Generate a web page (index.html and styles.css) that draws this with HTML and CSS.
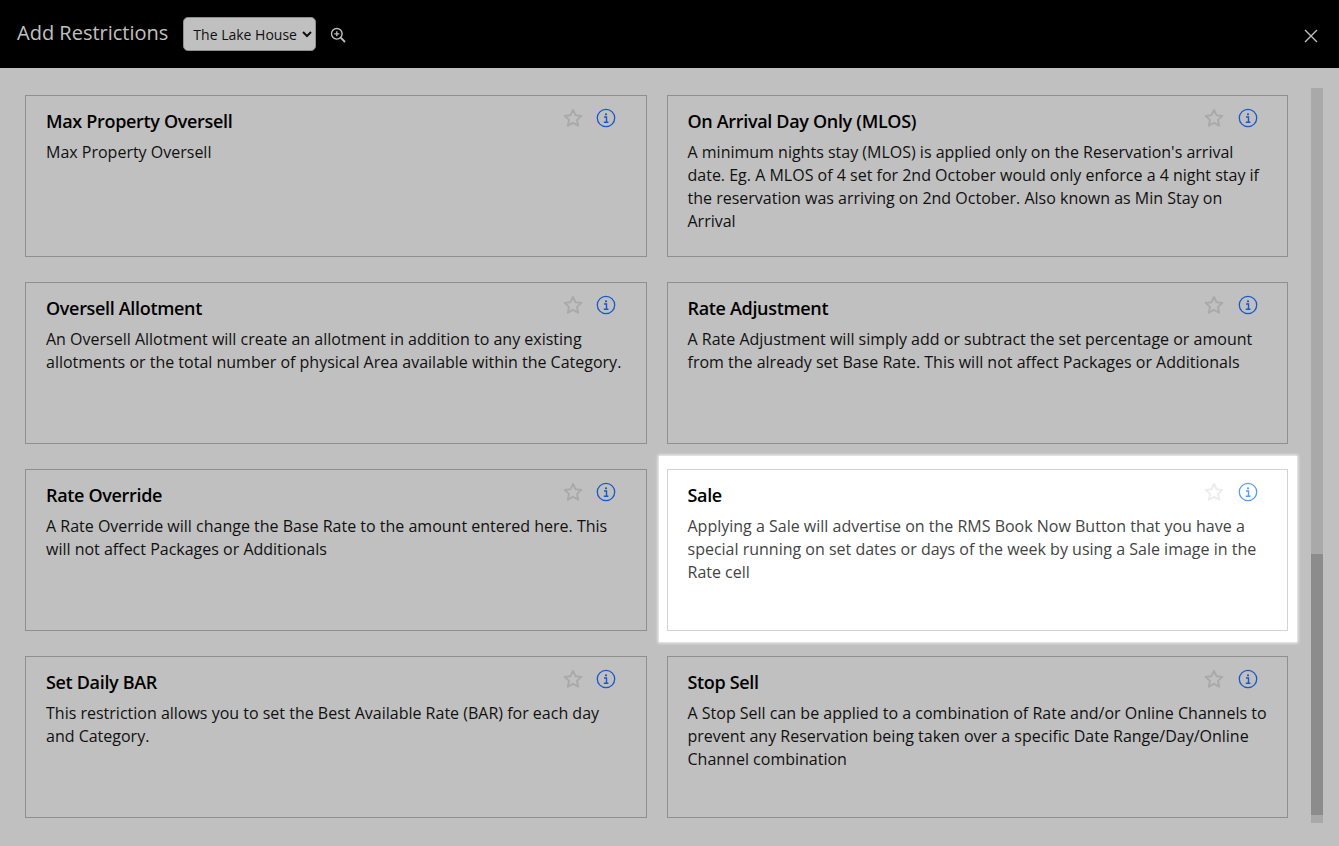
FILE: index.html
```html
<!DOCTYPE html>
<html lang="en">
<head>
<meta charset="utf-8">
<title>Add Restrictions</title>
<link rel="stylesheet" href="styles.css">
</head>
<body>
<svg class="defs" width="0" height="0" aria-hidden="true">
  <symbol id="star" viewBox="0 0 20 20"><path d="M10 1.800l2.500 5.400 5.900.7-4.400 4 1.200 5.800L10 14.800l-5.200 2.900L6 11.900l-4.400-4 5.900-.7z" fill="none" stroke="currentColor" stroke-width="1.900" stroke-linejoin="round"/></symbol>
  <symbol id="info" viewBox="0 0 20 20"><circle cx="10" cy="10" r="8.700" fill="none" stroke="currentColor" stroke-width="1.300"/><circle cx="10" cy="6.300" r="1.100" fill="currentColor"/><path d="M8 9h2.500v5M7.800 14.200h4.600" fill="none" stroke="currentColor" stroke-width="1.400"/></symbol>
</svg>
<header class="topbar">
  <h1 class="title">Add Restrictions</h1>
  <select class="property"><option>The Lake House</option></select>
  <svg class="zoom" width="16" height="16" viewBox="0 0 16 16"><circle cx="6.800" cy="6.800" r="5.300" fill="none" stroke="currentColor" stroke-width="1.400"/><path d="M10.700 10.700l4.300 4.300" stroke="currentColor" stroke-width="1.800"/><path d="M4.300 6.800h5M6.800 4.300v5" stroke="currentColor" stroke-width="1.300"/></svg>
  <button class="close" aria-label="Close"><svg width="14" height="14" viewBox="0 0 14 14"><path d="M1 1l12 12M13 1L1 13" stroke="currentColor" stroke-width="1.400"/></svg></button>
</header>
<div class="body">
  <main class="grid">
    <article class="card">
      <div class="icons"><svg class="star"><use href="#star"/></svg><svg class="info"><use href="#info"/></svg></div>
      <h2>Max Property Oversell</h2>
      <p>Max Property Oversell</p>
    </article>
    <article class="card">
      <div class="icons"><svg class="star"><use href="#star"/></svg><svg class="info"><use href="#info"/></svg></div>
      <h2>On Arrival Day Only (MLOS)</h2>
      <p>A minimum nights stay (MLOS) is applied only on the Reservation's arrival date. Eg. A MLOS of 4 set for 2nd October would only enforce a 4 night stay if the reservation was arriving on 2nd October. Also known as Min Stay on Arrival</p>
    </article>
    <article class="card">
      <div class="icons"><svg class="star"><use href="#star"/></svg><svg class="info"><use href="#info"/></svg></div>
      <h2>Oversell Allotment</h2>
      <p>An Oversell Allotment will create an allotment in addition to any existing allotments or the total number of physical Area available within the Category.</p>
    </article>
    <article class="card">
      <div class="icons"><svg class="star"><use href="#star"/></svg><svg class="info"><use href="#info"/></svg></div>
      <h2>Rate Adjustment</h2>
      <p>A Rate Adjustment will simply add or subtract the set percentage or amount from the already set Base Rate. This will not affect Packages or Additionals</p>
    </article>
    <article class="card">
      <div class="icons"><svg class="star"><use href="#star"/></svg><svg class="info"><use href="#info"/></svg></div>
      <h2>Rate Override</h2>
      <p>A Rate Override will change the Base Rate to the amount entered here. This will not affect Packages or Additionals</p>
    </article>
    <article class="card card-active">
      <div class="icons"><svg class="star"><use href="#star"/></svg><svg class="info"><use href="#info"/></svg></div>
      <h2>Sale</h2>
      <p>Applying a Sale will advertise on the RMS Book Now Button that you have a special running on set dates or days of the week by using a Sale image in the Rate cell</p>
    </article>
    <article class="card">
      <div class="icons"><svg class="star"><use href="#star"/></svg><svg class="info"><use href="#info"/></svg></div>
      <h2>Set Daily BAR</h2>
      <p>This restriction allows you to set the Best Available Rate (BAR) for each day and Category.</p>
    </article>
    <article class="card">
      <div class="icons"><svg class="star"><use href="#star"/></svg><svg class="info"><use href="#info"/></svg></div>
      <h2>Stop Sell</h2>
      <p>A Stop Sell can be applied to a combination of Rate and/or Online Channels to prevent any Reservation being taken over a specific Date Range/Day/Online Channel combination</p>
    </article>
  </main>
  <div class="track"><div class="thumb"></div></div>
</div>
</body>
</html>
```
FILE: styles.css
```css
* { box-sizing: border-box; }
html, body { height: 100%; }
body {
  margin: 0;
  background: #c0c0c0;
  color: #000;
  font-family: "Open Sans", "Liberation Sans", sans-serif;
  overflow: hidden;
}
.defs { display: block; height: 0; }
.topbar {
  height: 68px;
  background: #000;
  display: flex;
  align-items: center;
  padding: 0 21px 0 17px;
  color: #c0c0c0;
}
.title {
  margin: 0 15px 2px 0;
  font-size: 20px;
  font-weight: 400;
  line-height: 28px;
}
.property {
  width: 133px;
  height: 34px;
  padding: 0 0 0 5px;
  background-color: #c0c0c0;
  border: 1px solid #8f8f8f;
  border-radius: 5px;
  color: #111;
  font: 14px "Open Sans", "Liberation Sans", sans-serif;
}
.zoom { margin: 2px 0 0 14px; }
.close {
  margin: 3px 0 0 auto;
  padding: 0;
  width: 14px;
  height: 14px;
  background: none;
  border: 0;
  color: #c0c0c0;
  display: flex;
}
.body {
  height: 778px;
  display: flex;
  align-items: flex-start;
  padding: 20px 16px 0 25px;
}
.grid {
  width: 1263px;
  display: grid;
  grid-template-columns: 621.5px 621.5px;
  grid-auto-rows: 162px;
  gap: 25px 20px;
  padding-top: 7px;
}
.card {
  position: relative;
  border: 1px solid #8f8f8f;
  padding: 12px 18px 0 20px;
}
.card h2 {
  margin: 0;
  font-size: 18px;
  font-weight: 600;
  line-height: 26px;
  letter-spacing: -0.33px;
}
.card p {
  margin: 7px 0 0;
  font-size: 16px;
  line-height: 23px;
  color: #111;
}
.icons {
  position: absolute;
  top: 12px;
  right: 29.5px;
  display: flex;
  align-items: center;
  gap: 13.5px;
}
.star { width: 20px; height: 20px; color: #a9a9a9; }
.info { width: 20px; height: 20px; color: #1858c8; }
.card-active {
  background: #fff;
  border-color: #d3d3d3;
}
.card-active::before {
  content: "";
  position: absolute;
  z-index: -1;
  top: -14px;
  bottom: -12px;
  left: -8.5px;
  right: -10px;
  background: #fff;
  box-shadow: 0 0 3px 1px rgba(255, 255, 255, 0.85);
}
.card-active h2 { color: #000; }
.card-active p { color: #444; }
.card-active .star { color: #ececec; }
.card-active .info { color: #5a9bf5; }
.track {
  width: 12px;
  height: 735px;
  margin: 0 0 0 23px;
  background: #a9a9a9;
  padding-top: 466px;
}
.thumb {
  width: 12px;
  height: 261px;
  background: #8c8c8c;
}
```
